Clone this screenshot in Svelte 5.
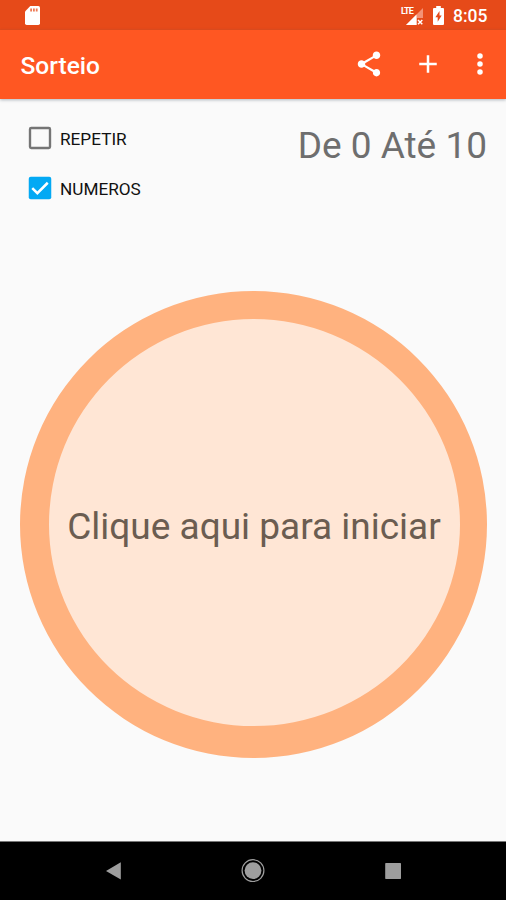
<script>
	let repeat = $state(false);
	let numbers = $state(true);
	let min = $state(0);
	let max = $state(10);
	let label = $state('Clique aqui para iniciar');
	let drawn = [];

	function draw() {
		let pool = [];
		for (let n = min; n <= max; n++) {
			if (repeat || !drawn.includes(n)) pool.push(n);
		}
		if (!pool.length) {
			drawn = [];
			return;
		}
		const pick = pool[Math.floor(Math.random() * pool.length)];
		drawn.push(pick);
		label = String(pick);
	}
</script>

{#snippet checkbox(checked)}
	<svg class="box" viewBox="0 0 24 24" aria-hidden="true">
		{#if checked}
			<rect x="3" y="3" width="18" height="18" rx="1.6" fill="#03a9f4" />
			<path d="M5.8 12.1l4.1 4.1 8.3-8.4" fill="none" stroke="#fff" stroke-width="2" />
		{:else}
			<rect x="4" y="4" width="16" height="16" rx="1" fill="none" stroke="#757575" stroke-width="1.9" />
		{/if}
	</svg>
{/snippet}

<div class="screen">
	<div class="status">
		<svg class="sd" viewBox="0 0 15 19">
			<path d="M5.3 0H13.3Q15 0 15 1.7V17.3Q15 19 13.3 19H1.7Q0 19 0 17.3V5.6Z" fill="#fff" />
			<path d="M5.2 2.6h1.8v3H5.2zM8 2.6h1.8v3H8zM10.8 2.6h1.8v3h-1.8z" fill="#ee7a55" />
		</svg>
		<div class="signal">
			<span class="lte">LTE</span>
			<svg class="bars" viewBox="0 0 17 17">
				<path d="M17 0v10h-6v7H0z" fill="#f39275" />
				<path d="M10.5 6.5V17H0z" fill="#fff" />
				<path d="M12 12l4.3 4.3M16.3 12L12 16.3" stroke="#fff" stroke-width="1.5" />
			</svg>
		</div>
		<svg class="battery" viewBox="0 0 11 19">
			<path d="M3.2 0h4.6v2H10q1 0 1 1v15q0 1-1 1H1q-1 0-1-1V3q0-1 1-1h2.2z" fill="#fff" />
			<path d="M6.5 5L2.4 11.2h2.3v4.6l4-6.4H6.5z" fill="#e64a19" />
		</svg>
		<span class="clock">8:05</span>
	</div>

	<header class="appbar">
		<h1>Sorteio</h1>
		<button class="icon share" aria-label="Compartilhar">
			<svg viewBox="0 0 24 24">
				<path d="M18 16.08c-.76 0-1.44.3-1.96.77L8.91 12.7c.05-.23.09-.46.09-.7s-.04-.47-.09-.7l7.05-4.11c.54.5 1.25.81 2.04.81 1.66 0 3-1.34 3-3s-1.34-3-3-3-3 1.34-3 3c0 .24.04.47.09.7L8.04 9.81C7.5 9.31 6.79 9 6 9c-1.66 0-3 1.34-3 3s1.34 3 3 3c.79 0 1.5-.31 2.04-.81l7.12 4.16c-.05.21-.08.43-.08.65 0 1.61 1.31 2.92 2.92 2.92s2.92-1.31 2.92-2.92-1.31-2.92-2.92-2.92z" />
			</svg>
		</button>
		<button class="icon add" aria-label="Adicionar">
			<svg viewBox="0 0 24 24"><path d="M19 13h-6v6h-2v-6H5v-2h6V5h2v6h6v2z" /></svg>
		</button>
		<button class="icon" aria-label="Mais">
			<svg viewBox="0 0 24 24">
				<circle cx="12" cy="5.6" r="2.2" />
				<circle cx="12" cy="12" r="2.2" />
				<circle cx="12" cy="18.4" r="2.2" />
			</svg>
		</button>
	</header>

	<main>
		<div class="options">
			<div class="checks">
				<button class="check" role="checkbox" aria-checked={repeat} onclick={() => (repeat = !repeat)}>
					{@render checkbox(repeat)}
					<span>REPETIR</span>
				</button>
				<button class="check" role="checkbox" aria-checked={numbers} onclick={() => (numbers = !numbers)}>
					{@render checkbox(numbers)}
					<span>NUMEROS</span>
				</button>
			</div>
			<div class="range">De {min} Até {max}</div>
		</div>
		<button class="circle" onclick={draw}><span>{label}</span></button>
	</main>

	<nav>
		<svg viewBox="0 0 24 24"><path d="M15.8 3.2v17.4L1 11.9z" /></svg>
		<svg viewBox="0 0 24 24">
			<circle cx="12" cy="11.6" r="10.9" class="ring" />
			<circle cx="12" cy="11.6" r="8.4" />
		</svg>
		<svg viewBox="0 0 24 24"><rect x="4.2" y="4.1" width="15.8" height="15.8" rx=".6" /></svg>
	</nav>
</div>

<style>
	:global(body) {
		margin: 0;
	}

	.screen {
		display: flex;
		flex-direction: column;
		width: 506px;
		height: 900px;
		overflow: hidden;
		background: #fafafa;
		font-family: Roboto, 'Liberation Sans', sans-serif;
	}

	svg {
		display: block;
	}

	button {
		border: 0;
		padding: 0;
		background: none;
		font: inherit;
		cursor: pointer;
	}

	.status {
		display: flex;
		align-items: center;
		box-sizing: border-box;
		height: 30px;
		padding: 0 18px 0 25px;
		background: #e64a19;
		color: #fff;
	}

	.sd {
		width: 15px;
		height: 19px;
		margin-right: auto;
	}

	.signal {
		display: flex;
		align-items: flex-start;
		height: 19px;
	}

	.lte {
		width: 12px;
		margin-right: -7px;
		font-size: 9px;
		font-weight: 700;
		line-height: 10px;
		letter-spacing: -0.8px;
	}

	.bars {
		width: 17px;
		height: 17px;
		margin-top: 2px;
	}

	.battery {
		width: 11px;
		height: 19px;
		margin: 0 9px 0 10px;
	}

	.clock {
		width: 35px;
		padding-top: 2px;
		font-size: 17.5px;
		font-weight: 500;
		line-height: 28px;
		white-space: nowrap;
	}

	.appbar {
		display: flex;
		align-items: center;
		box-sizing: border-box;
		height: 69px;
		flex: none;
		padding: 0 11.5px 2px 20.5px;
		background: #ff5722;
		color: #fff;
		box-shadow: 0 1px 3px rgba(60, 80, 100, 0.4);
	}

	h1 {
		flex: 1;
		margin: 4px 0 0;
		font-size: 24.5px;
		font-weight: 500;
		line-height: 30px;
	}

	.icon svg {
		width: 30px;
		height: 30px;
		fill: #fff;
	}

	.share {
		margin-right: 29px;
	}

	.add {
		margin-right: 22px;
	}

	main {
		display: flex;
		flex: 1;
		flex-direction: column;
		align-items: center;
	}

	.options {
		display: flex;
		justify-content: space-between;
		box-sizing: border-box;
		width: 100%;
		height: 192px;
		padding: 14px 19px 0 25px;
	}

	.check {
		display: flex;
		align-items: center;
		height: 50px;
		color: #111;
		font-size: 17.2px;
	}

	.check span {
		padding-top: 2px;
	}

	.box {
		width: 30px;
		height: 30px;
		margin-right: 5px;
	}

	.range {
		margin-top: 9px;
		color: #6e6e6e;
		font-size: 37px;
		line-height: 48px;
	}

	.circle {
		box-sizing: border-box;
		width: 467px;
		height: 467px;
		padding-top: 8px;
		border: solid #ffb27f;
		border-width: 28px 27px 32px 29px;
		border-radius: 50%;
		background: #ffe6d5;
		color: #6b5d51;
		font-size: 37px;
		white-space: nowrap;
	}

	nav {
		display: flex;
		align-items: center;
		justify-content: space-between;
		box-sizing: border-box;
		height: 59px;
		padding: 0 101px;
		border-top: 1px solid #777;
		background: #000;
	}

	nav svg {
		width: 24px;
		height: 24px;
		fill: #9e9e9e;
	}

	nav svg:first-child {
		overflow: visible;
		padding-left: 4px;
		margin-right: -4px;
	}

	nav .ring {
		fill: none;
		stroke: #9e9e9e;
		stroke-width: 1.2;
	}
</style>
